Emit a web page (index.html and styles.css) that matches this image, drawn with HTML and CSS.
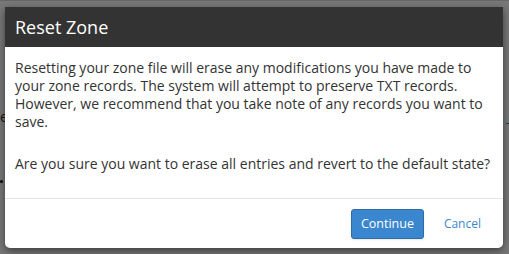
FILE: index.html
```html
<!DOCTYPE html>
<html lang="en">
<head>
    <meta charset="UTF-8">
    <title>Reset Zone</title>
    <link rel="stylesheet" href="styles.css">
</head>
<body>
    <div class="page">
        <span class="behind-text">e</span>
        <span class="behind-dot"></span>
        <span class="behind-link"></span>
    </div>
    <div class="overlay"></div>
    <div class="modal">
        <div class="modal-header">
            <h2>Reset Zone</h2>
        </div>
        <div class="modal-body">
            <p>Resetting your zone file will erase any modifications you have made to your zone records. The system will attempt to preserve TXT records. However, we recommend that you take note of any records you want to save.</p>
            <p>Are you sure you want to erase all entries and revert to the default state?</p>
        </div>
        <div class="modal-footer">
            <button type="button" class="btn-primary">Continue</button>
            <a href="#" class="btn-link">Cancel</a>
        </div>
    </div>
</body>
</html>
```

FILE: styles.css
```css
body {
    margin: 0;
    width: 509px;
    height: 254px;
    overflow: hidden;
    font-family: "Open Sans", Arial, sans-serif;
    background: #fff;
    position: relative;
}
.page {
    height: 254px;
    border-top: 1px solid #ddd;
}
.behind-text {
    position: absolute;
    left: 0;
    top: 107px;
    font-size: 14px;
    color: #333;
}
.behind-dot {
    position: absolute;
    left: 0;
    top: 180px;
    width: 3px;
    height: 3px;
    border-radius: 50%;
    background: #000;
}
.behind-link {
    position: absolute;
    right: 0;
    top: 123px;
    width: 3px;
    height: 1px;
    background: #3a87cf;
}
.overlay {
    position: absolute;
    inset: 0;
    background: rgba(0, 0, 0, 0.53);
}
.modal {
    position: absolute;
    left: 5px;
    top: 7px;
    width: 498px;
    height: 241px;
    background: #fff;
    border-radius: 0 0 5px 5px;
    box-shadow: 0 3px 9px rgba(0, 0, 0, 0.5);
    display: flex;
    flex-direction: column;
}
.modal-header {
    background: #333;
    height: 40px;
    padding: 0 10px;
    display: flex;
    align-items: center;
}
.modal-header h2 {
    margin: 0;
    color: #fff;
    font-size: 18px;
    font-weight: 400;
}
.modal-body {
    padding: 12px 10px 0;
    flex: 1;
    border-bottom: 1px solid #e5e5e5;
    font-size: 14px;
    line-height: 18px;
    color: #333;
}
.modal-body p {
    margin: 0 0 24px;
}
.modal-footer {
    height: 49px;
    display: flex;
    align-items: center;
    justify-content: flex-end;
    padding-right: 22px;
}
.btn-primary {
    width: 73px;
    height: 30px;
    background: #3a87cf;
    border: 1px solid #2e6da4;
    border-radius: 3px;
    color: #fff;
    font-family: inherit;
    font-size: 12.5px;
    box-shadow: 0 1px 2px rgba(0, 0, 0, 0.1);
    margin-right: 20px;
    padding: 0;
}
.btn-link {
    color: #3a87cf;
    font-size: 12px;
    text-decoration: none;
}
```
